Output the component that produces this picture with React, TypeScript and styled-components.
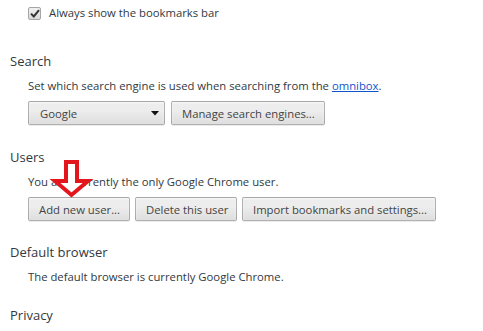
import React from 'react';
import styled, { createGlobalStyle } from 'styled-components';

const Global = createGlobalStyle`
  html, body {
    margin: 0;
    background: #fff;
  }
  body {
    font-family: 'Open Sans', 'Liberation Sans', sans-serif;
    color: #303942;
    font-size: 11.3px;
  }
`;

const Page = styled.div`
  position: relative;
  width: 483px;
  height: 331px;
  overflow: hidden;
  padding: 4px 0 0 10px;
  box-sizing: border-box;
`;

const CheckRow = styled.label`
  display: flex;
  align-items: center;
  gap: 8px;
  height: 18px;
  margin-left: 18px;
  line-height: 18px;
`;

const CheckBox = styled.span`
  width: 13px;
  height: 13px;
  box-sizing: border-box;
  border: 1px solid #a6a6a6;
  border-radius: 2px;
  background: linear-gradient(#f1f1f1, #d8d8d8);
  display: flex;
  align-items: center;
  justify-content: center;
`;

const Section = styled.section<{ $top: number }>`
  margin-top: ${(p) => p.$top}px;
  display: flex;
  flex-direction: column;
  gap: 6px;
`;

const Heading = styled.h3`
  margin: 0;
  font-size: 13px;
  font-weight: normal;
  line-height: 20px;
  color: #303942;
`;

const Body = styled.div`
  position: relative;
  margin-left: 18px;
  display: flex;
  flex-direction: column;
  gap: 6px;
`;

const Text = styled.div`
  line-height: 18px;
  white-space: nowrap;
`;

const Link = styled.a`
  color: #15c;
  text-decoration: underline;
`;

const Row = styled.div<{ $gap: number }>`
  display: flex;
  gap: ${(p) => p.$gap}px;
`;

const Button = styled.button<{ $w: number }>`
  width: ${(p) => p.$w}px;
  height: 24px;
  padding: 0 10px;
  box-sizing: border-box;
  font-family: inherit;
  font-size: 11.3px;
  color: #444;
  border: 1px solid rgba(0, 0, 0, 0.25);
  border-radius: 2px;
  background: linear-gradient(#ededed, #ededed 38%, #dedede);
  box-shadow: 0 1px 0 rgba(0, 0, 0, 0.08), inset 0 1px 2px rgba(255, 255, 255, 0.75);
  text-align: center;
  white-space: nowrap;
`;

const Select = styled(Button)`
  display: flex;
  align-items: center;
  justify-content: space-between;
  text-align: left;
  padding: 0 5px 0 11px;
`;

const Arrow = styled.svg`
  position: absolute;
  left: 20px;
  top: -15px;
`;

export default function App() {
  return (
    <>
      <Global />
      <Page>
        <CheckRow>
          <CheckBox>
            <svg width="10" height="9" viewBox="0 0 10 9">
              <path d="M1 4.6 L3.8 7.4 L9 1.2" fill="none" stroke="#333" strokeWidth="2" />
            </svg>
          </CheckBox>
          Always show the bookmarks bar
        </CheckRow>

        <Section $top={29}>
          <Heading>Search</Heading>
          <Body>
            <Text>
              Set which search engine is used when searching from the <Link>omnibox</Link>.
            </Text>
            <Row $gap={6}>
              <Select $w={137}>
                <span>Google</span>
                <svg width="8" height="5" viewBox="0 0 8 5">
                  <path d="M0 0 H8 L4 4.5 Z" fill="#111" />
                </svg>
              </Select>
              <Button $w={154}>Manage search engines...</Button>
            </Row>
          </Body>
        </Section>

        <Section $top={22}>
          <Heading>Users</Heading>
          <Body>
            <Text>You are currently the only Google Chrome user.</Text>
            <Row $gap={5}>
              <Button $w={102}>Add new user...</Button>
              <Button $w={102}>Delete this user</Button>
              <Button $w={194}>Import bookmarks and settings...</Button>
            </Row>
            <Arrow width="48" height="42" viewBox="0 0 48 42">
              <polygon
                points="18,4 29,4 29,23 40,23 23.5,37 7,23 18,23"
                fill="#fff"
                stroke="#e3161d"
                strokeWidth="4"
                strokeLinejoin="miter"
              />
            </Arrow>
          </Body>
        </Section>

        <Section $top={21}>
          <Heading>Default browser</Heading>
          <Body>
            <Text>The default browser is currently Google Chrome.</Text>
          </Body>
        </Section>

        <Section $top={19}>
          <Heading>Privacy</Heading>
        </Section>
      </Page>
    </>
  );
}
